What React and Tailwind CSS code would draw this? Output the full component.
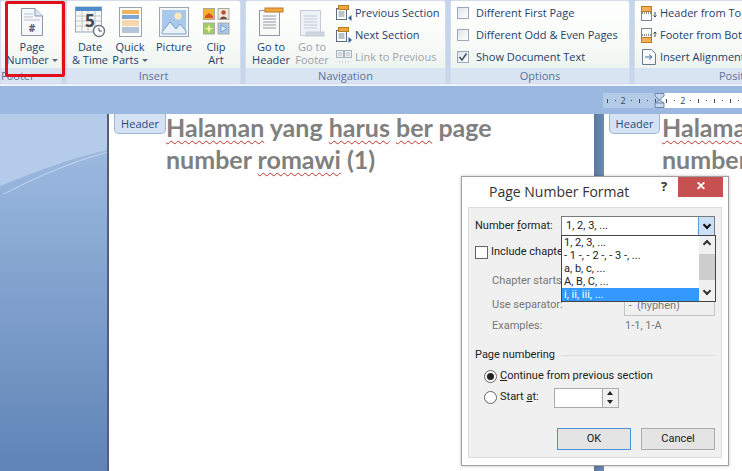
// App.jsx - Word ribbon with Page Number Format dialog
const font = { fontFamily: '"Open Sans", "Noto Sans", sans-serif' };

function DocIcon() {
  return (
    <svg width="24" height="30" viewBox="0 0 24 30">
      <path d="M1.5 1.5H15L22.5 9V28.5H1.5Z" fill="#f6f8fb" stroke="#8a99ab" />
      <path d="M15 1.5V9H22.5" fill="#dfe6ef" stroke="#8a99ab" />
      <path d="M4 7H13M4 10H13M4 13H20" stroke="#b5c0cf" />
      <text x="12" y="25" textAnchor="middle" fontSize="10" fontWeight="700" fill="#4e6078">#</text>
    </svg>
  );
}

function DateIcon() {
  return (
    <svg width="31" height="32" viewBox="0 0 31 32">
      <rect x="0.5" y="1" width="26" height="25" fill="#f7f7f3" stroke="#9aa7b5" />
      <rect x="0.5" y="1" width="26" height="4" fill="#4e8ccd" />
      <path d="M1 10H26M1 15H26M1 20H26M7 5V26M13 5V26M20 5V26" stroke="#c0c6cc" />
      <text x="10" y="21" fontSize="17" fontWeight="700" fill="#404a55">5</text>
      <circle cx="24" cy="25" r="5.5" fill="#fff" stroke="#6b7783" strokeWidth="1.4" />
      <path d="M24 22V25H27" stroke="#4a5560" fill="none" />
    </svg>
  );
}

function PartsIcon() {
  return (
    <svg width="23" height="30" viewBox="0 0 23 30">
      <rect x="0.5" y="0.5" width="22" height="29" fill="#fbfbf8" stroke="#9aa5b1" />
      <rect x="3" y="3" width="17" height="4" fill="#f0b45e" />
      <rect x="3" y="8" width="17" height="4" fill="#7da5d6" />
      <path d="M3 14H20M3 16H20M3 18H20" stroke="#f0b45e" />
      <path d="M3 21H20M3 23H20M3 25H20" stroke="#6e8eb8" />
    </svg>
  );
}

function PictureIcon() {
  return (
    <svg width="30" height="30" viewBox="0 0 30 30">
      <rect x="0.5" y="0.5" width="29" height="29" fill="#f4f7fa" stroke="#9aa7b5" />
      <rect x="3" y="3" width="24" height="24" fill="#a9c9ec" />
      <circle cx="19" cy="9" r="3.5" fill="#fbe9bd" />
      <path d="M3 25L11 15L17 22L21 17L27 24V27H3Z" fill="#e8f0f8" stroke="#7fa0c4" />
    </svg>
  );
}

function ClipIcon() {
  return (
    <svg width="27" height="27" viewBox="0 0 27 27">
      <rect x="0.5" y="0.5" width="11" height="11" fill="#f3b32f" stroke="#a9a9a0" />
      <path d="M2 8L6 5L10 8V10H2Z" fill="#d9531e" />
      <rect x="15" y="0.5" width="11" height="11" fill="#efe7dc" stroke="#a9a9a0" />
      <circle cx="20.5" cy="4.5" r="2.2" fill="#b5532f" />
      <path d="M17 11C17 7.5 24 7.5 24 11Z" fill="#6d4a3a" />
      <rect x="0.5" y="15" width="11" height="11" fill="#9ecb6c" stroke="#a9a9a0" />
      <path d="M6 16.5L7.3 20L11 20.5L7.3 21.5L6 25L4.7 21.5L1 20.5L4.7 20Z" fill="#f6f3a0" />
      <rect x="15" y="15" width="11" height="11" fill="#a7c6ea" stroke="#a9a9a0" />
      <path d="M18 17L24 20.5L18 24Z" fill="#dbe8f7" stroke="#7fa0c4" />
    </svg>
  );
}

function PageIcon({ faded }) {
  const line = faded ? "#c3ccd7" : "#8e98a6";
  const bar = faded ? "#ccd5e0" : "#f0a83c";
  return (
    <svg width="26" height="30" viewBox="0 0 26 30">
      <rect x="1.5" y="3.5" width="20" height="25" fill={faded ? "#eef1f5" : "#f9f9f6"} stroke={line} />
      <rect x="7" y={faded ? 25 : 1} width="18" height="4" fill={bar} stroke={faded ? line : "#b97a22"} />
      <path d="M5 9H18M5 12H18M5 15H18M5 18H18M5 21H18" stroke={line} />
    </svg>
  );
}

function SmallNav({ dir }) {
  return (
    <svg width="16" height="16" viewBox="0 0 16 16">
      <rect x="0.5" y="3.5" width="10" height="11" fill="#fff" stroke="#5b6b7f" />
      <rect x="2.5" y="0.5" width="10" height="4" fill="#f0a83c" stroke="#b97a22" />
      <path d="M2.5 7H8.5M2.5 9H8.5M2.5 11H8.5" stroke="#7a8797" />
      {dir === "prev" ? <path d="M15.5 10V16L12 13Z" fill="#2f5f9a" /> : <path d="M12.5 10V16L16 13Z" fill="#2f5f9a" />}
    </svg>
  );
}

function LinkIcon() {
  return (
    <svg width="16" height="15" viewBox="0 0 16 15">
      <rect x="0.5" y="0.5" width="7" height="7" fill="#eef1f4" stroke="#aab4bf" />
      <rect x="8.5" y="0.5" width="7" height="7" fill="#eef1f4" stroke="#aab4bf" />
      <path d="M2 3H6M2 5H6M10 3H14M10 5H14" stroke="#b7c0ca" />
      <path d="M3 12H13" stroke="#9aa5b0" strokeDasharray="1 2" />
    </svg>
  );
}

function PosIcon({ kind }) {
  if (kind === "align") {
    return (
      <svg width="14" height="16" viewBox="0 0 14 16">
        <path d="M0.5 0.5H9.5L13.5 4.5V15.5H0.5Z" fill="#f7f9fb" stroke="#6b7c90" />
        <path d="M3 8H9M7 5.5L10 8L7 10.5" stroke="#3a6ea8" fill="none" />
      </svg>
    );
  }
  const top = kind === "header";
  return (
    <svg width="16" height="15" viewBox="0 0 16 15">
      <rect x="0.5" y="0.5" width="10" height="14" fill="#fff" stroke="#7b8794" />
      <rect x="0.5" y={top ? 0.5 : 9.5} width="10" height="5" fill="#f2b05a" stroke="#b97a22" />
      <path d="M1 7H10" stroke="#222" strokeDasharray="1 1" />
      <path d={top ? "M14 6V11M12.5 9.5L14 11L15.5 9.5" : "M14 9V4M12.5 5.5L14 4L15.5 5.5"} stroke="#3a4a5c" fill="none" />
    </svg>
  );
}

function BigButton({ icon, l1, l2, arrow, faded, w }) {
  return (
    <div className={`flex flex-col items-center ${w} ${faded ? "text-[#9aa0a8]" : "text-[#1f3f6b]"}`}>
      <div className="h-[35px] flex items-center justify-center">{icon}</div>
      <div className="text-[11px] leading-[13px] mt-[1px] text-center whitespace-nowrap">{l1}</div>
      <div className="text-[11px] leading-[13px] text-center whitespace-nowrap">
        {l2}
        {arrow && <span className="inline-block ml-[3px] mb-[2px] border-x-[3px] border-t-[3px] border-x-transparent border-t-[#5a6b80]" />}
      </div>
    </div>
  );
}

function Group({ w, label, children, labelClass = "" }) {
  return (
    <div className={`${w} h-[84px] shrink-0 flex flex-col rounded-[3px] border border-[#d5dde8] bg-gradient-to-b from-white via-[#f8fbf8] to-[#e8f0ec] overflow-hidden`}>
      <div className="h-[68px] flex items-start overflow-hidden">{children}</div>
      <div className={`h-[15px] bg-[#d9e4f3] text-[11px] leading-[15px] text-center text-[#5b7199] whitespace-nowrap ${labelClass}`}>{label}</div>
    </div>
  );
}

function SmallRow({ icon, text, faded }) {
  return (
    <div className={`h-[22px] flex items-center gap-[3px] whitespace-nowrap text-[11px] ${faded ? "text-[#a0a5ab]" : "text-[#1f3f6b]"}`}>
      <div className="w-[16px] flex justify-center">{icon}</div>
      {text}
    </div>
  );
}

function CheckRow({ text, checked }) {
  return (
    <div className="h-[22px] flex items-center gap-[7px] whitespace-nowrap text-[11px] text-[#1f3f6b]">
      <div className="w-[12px] h-[12px] border border-[#9aa9ba] bg-gradient-to-br from-[#dfe3e8] to-white flex items-center justify-center">
        {checked && (
          <svg width="10" height="10" viewBox="0 0 10 10">
            <path d="M1.5 5L4 8L8.5 1.5" stroke="#43566e" strokeWidth="1.6" fill="none" />
          </svg>
        )}
      </div>
      {text}
    </div>
  );
}

function Ribbon() {
  return (
    <div className="h-[86px] bg-[#c5d6ec] border-b-[2px] border-[#eef2f7] flex items-start gap-[4px] overflow-hidden">
      <Group w="w-[62px]" label="Footer" labelClass="text-left">
        <div className="pl-[5px] pt-[3px]">
          <BigButton w="w-[52px]" icon={<DocIcon />} l1="Page" l2="Number" arrow />
        </div>
      </Group>
      <Group w="w-[175px]" label="Insert">
        <div className="flex pl-[1px] pt-[3px]">
          <BigButton w="w-[44px]" icon={<DateIcon />} l1="Date" l2="& Time" />
          <BigButton w="w-[36px]" icon={<PartsIcon />} l1="Quick" l2="Parts" arrow />
          <BigButton w="w-[52px]" icon={<PictureIcon />} l1="Picture" l2=" " />
          <BigButton w="w-[32px]" icon={<ClipIcon />} l1="Clip" l2="Art" />
        </div>
      </Group>
      <Group w="w-[201px]" label="Navigation">
        <div className="flex pl-[3px] pt-[3px]">
          <BigButton w="w-[44px]" icon={<PageIcon />} l1="Go to" l2="Header" />
          <BigButton w="w-[38px]" faded icon={<PageIcon faded />} l1="Go to" l2="Footer" />
        </div>
        <div className="flex flex-col pt-[1px] ml-[5px]">
          <SmallRow icon={<SmallNav dir="prev" />} text="Previous Section" />
          <SmallRow icon={<SmallNav dir="next" />} text="Next Section" />
          <SmallRow faded icon={<LinkIcon />} text="Link to Previous" />
        </div>
      </Group>
      <Group w="w-[180px]" label="Options">
        <div className="flex flex-col pt-[1px] pl-[6px]">
          <CheckRow text="Different First Page" />
          <CheckRow text="Different Odd & Even Pages" />
          <CheckRow text="Show Document Text" checked />
        </div>
      </Group>
      <Group w="w-[120px]" label="Position" labelClass="text-left pl-[84px]">
        <div className="flex flex-col pt-[1px] pl-[6px]">
          <SmallRow icon={<PosIcon kind="header" />} text="Header from Top:" />
          <SmallRow icon={<PosIcon kind="footer" />} text="Footer from Bottom:" />
          <SmallRow icon={<PosIcon kind="align" />} text="Insert Alignment Tab" />
        </div>
      </Group>
    </div>
  );
}

function Ruler() {
  const ticks = (n) =>
    Array.from({ length: n }, (_, i) => (
      <span key={i} className="w-[8px] flex justify-center items-center">
        {i % 8 === 2 ? "2" : <span className={`w-px bg-[#3c4a5c] ${i % 2 ? "h-[1px]" : "h-[4px]"}`} />}
      </span>
    ));
  return (
    <div className="h-[28px] bg-[#9ab8e0] flex justify-end pt-[7px]">
      <div className="w-[139px] h-[15px] flex relative text-[9px] leading-[15px] text-[#3c4a5c] overflow-hidden">
        <div className="w-[57px] bg-[#b4cbe8] flex overflow-hidden">{ticks(7)}</div>
        <div className="flex-1 bg-white flex overflow-hidden pl-[3px]">{ticks(10)}</div>
        <svg className="absolute left-[51px] top-0" width="12" height="15" viewBox="0 0 12 15">
          <path d="M1 .5H10V3L5.5 7L1 3Z" fill="#c6d6ec" stroke="#6c88ac" />
          <path d="M5.5 7L10 10V14.5H1V10Z" fill="#c6d6ec" stroke="#6c88ac" />
          <path d="M1 10H10" stroke="#6c88ac" />
        </svg>
      </div>
    </div>
  );
}

function HeaderTag({ className = "" }) {
  return (
    <div className={`absolute top-0 h-[20px] bg-[#d5e2f4] border border-t-0 border-[#9db4d3] rounded-b-[5px] text-[11px] leading-[19px] text-center text-[#1f4a80] ${className}`} style={font}>
      Header
    </div>
  );
}

function Squiggle({ children }) {
  return <span className="underline decoration-wavy decoration-[#c0342e] decoration-1 underline-offset-[3px]">{children}</span>;
}

function Sidebar() {
  return (
    <div className="w-[109px] shrink-0 relative overflow-hidden bg-gradient-to-b from-[#a3bfe4] to-[#5f84b6] border-r-[2px] border-[#55606e]">
      <svg className="absolute left-0 top-0" width="108" height="80" viewBox="0 0 108 80">
        <path d="M0 0H108V36C70 44 30 60 0 72Z" fill="#b4cbe9" />
        <path d="M0 82C30 66 70 48 108 38" stroke="#c3d6ee" strokeWidth="1" fill="none" />
      </svg>
    </div>
  );
}

function Document() {
  const heading = "text-[#808080] text-[25px] leading-[32px] font-bold";
  const headFont = { fontFamily: 'Lato, "Open Sans", sans-serif' };
  return (
    <div className="h-[357px] flex bg-[#5f7fa8] overflow-hidden">
      <Sidebar />
      <div className="w-[485px] shrink-0 bg-white relative pl-[57px]" style={headFont}>
        <HeaderTag className="left-[5px] w-[52px]" />
        <div className={`${heading} -mt-[3px]`}>
          <Squiggle>Halaman</Squiggle> yang <Squiggle>harus</Squiggle> <Squiggle>ber</Squiggle> page
        </div>
        <div className={heading}>
          number <Squiggle>romawi</Squiggle> (1)
        </div>
      </div>
      <div className="w-[10px] shrink-0 bg-gradient-to-r from-[#5a789f] to-[#6c8bb4]" />
      <div className="flex-1 bg-white relative pl-[58px] whitespace-nowrap overflow-hidden" style={headFont}>
        <HeaderTag className="left-[5px] w-[51px]" />
        <div className={`${heading} -mt-[3px]`}>
          <Squiggle>Halaman</Squiggle>
        </div>
        <div className={heading}>number</div>
      </div>
    </div>
  );
}

function Scroll() {
  return (
    <div className="w-[16px] flex flex-col items-center justify-between bg-[#f0f0f0] h-full">
      <span className="mt-[5px] w-[6px] h-[6px] border-l-[2px] border-t-[2px] border-[#333] rotate-45" />
      <span className="absolute top-[18px] right-0 w-[16px] h-[26px] bg-[#cdcdcd]" />
      <span className="mb-[7px] w-[6px] h-[6px] border-r-[2px] border-b-[2px] border-[#333] rotate-45" />
    </div>
  );
}

function Dialog() {
  return (
    <div className="absolute left-[461px] top-[176px] w-[268px] h-[290px] bg-white border border-[#a0a0a0] shadow-[0_0_3px_rgba(0,0,0,0.25)] flex flex-col text-[11px] text-[#222]" style={{ fontFamily: 'Roboto, "Open Sans", sans-serif' }}>
      <div className="h-[30px] shrink-0 relative text-[14px] leading-[30px] text-[#333]" style={font}>
        <span className="absolute left-[27px] top-0">Page Number Format</span>
        <span className="absolute left-[199px] top-[-6px] font-bold text-[13px]">?</span>
        <div className="absolute right-[5px] top-0 w-[45px] h-[20px] bg-[#c75050] text-white text-center text-[12px] leading-[18px] font-bold">✕</div>
      </div>
      <div className="mx-[6px] h-[251px] bg-[#f0f0f0] border border-[#dcdcdc] px-[6px] pt-[8px] relative">
        <div className="flex items-center h-[20px]">
          <span className="w-[86px]">Number <u>f</u>ormat:</span>
          <div className="flex-1 h-[20px] bg-white border border-[#7a7a7a] pl-[4px] flex justify-between items-center leading-[18px]">
            1, 2, 3, ...
            <span className="w-[16px] h-[18px] bg-[#c9e0f7] border-l border-[#5a9bd5] flex items-center justify-center">
              <span className="w-[6px] h-[6px] border-r-[2px] border-b-[2px] border-[#111] rotate-45 mb-[3px]" />
            </span>
          </div>
        </div>
        <div className="absolute left-[92px] top-[27px] w-[155px] h-[67px] z-10 bg-white border border-[#444] flex">
          <div className="flex-1 flex flex-col leading-[13px]">
            <div className="pl-[2px]">1, 2, 3, ...</div>
            <div className="pl-[2px]">- 1 -, - 2 -, - 3 -, ...</div>
            <div className="pl-[2px]">a, b, c, ...</div>
            <div className="pl-[2px]">A, B, C, ...</div>
            <div className="pl-[2px] bg-[#3399ff] text-white">i, ii, iii, ...</div>
          </div>
          <Scroll />
        </div>
        <div className="flex items-center mt-[10px] h-[13px] gap-[3px]">
          <span className="w-[13px] h-[13px] bg-white border border-[#666]" />
          Include chapter number
        </div>
        <div className="pl-[17px] text-[#777] flex flex-col">
          <div className="h-[25px] mt-[9px] leading-[25px]">Chapter starts with style:</div>
          <div className="h-[25px] flex items-center">
            <span className="w-[133px]">Use separator:</span>
            <div className="w-[91px] h-[20px] border border-[#c4c4c4] pl-[3px] leading-[18px]">- &nbsp;(hyphen)</div>
          </div>
          <div className="h-[17px] flex items-center">
            <span className="w-[133px]">Examples:</span>1-1, 1-A
          </div>
        </div>
        <div className="flex items-center gap-[6px] mt-[12px] h-[16px]">
          Page numbering
          <span className="flex-1 h-px bg-[#dcdcdc]" />
        </div>
        <div className="flex items-center gap-[3px] pl-[9px] mt-[3px] h-[21px]">
          <span className="w-[13px] h-[13px] rounded-full bg-white border border-[#666] flex items-center justify-center">
            <span className="w-[7px] h-[7px] rounded-full bg-[#222]" />
          </span>
          <span><u>C</u>ontinue from previous section</span>
        </div>
        <div className="flex items-center gap-[3px] pl-[9px] h-[21px]">
          <span className="w-[13px] h-[13px] rounded-full bg-white border border-[#666]" />
          <span>Start <u>a</u>t:</span>
          <div className="ml-[12px] w-[65px] h-[20px] bg-white border border-[#aaa] flex justify-end">
            <div className="w-[16px] h-full bg-[#f0f0f0] border-l border-[#aaa] flex flex-col items-center justify-around">
              <span className="border-x-[3px] border-b-[4px] border-x-transparent border-b-[#222]" />
              <span className="border-x-[3px] border-t-[4px] border-x-transparent border-t-[#222]" />
            </div>
          </div>
        </div>
        <div className="flex justify-end gap-[10px] mt-[20px]">
          <div className="w-[74px] h-[22px] bg-[#e4e4e4] border border-[#4a90d9] text-center leading-[20px]">OK</div>
          <div className="w-[74px] h-[22px] bg-[#e4e4e4] border border-[#acacac] text-center leading-[20px]">Cancel</div>
        </div>
      </div>
    </div>
  );
}

export default function App() {
  return (
    <div className="w-[742px] h-[471px] relative overflow-hidden bg-white" style={font}>
      <Ribbon />
      <Ruler />
      <Document />
      <div className="absolute left-[5px] top-[1px] w-[60px] h-[76px] border-[3px] border-[#e0101a] rounded-[2px]" />
      <Dialog />
    </div>
  );
}
